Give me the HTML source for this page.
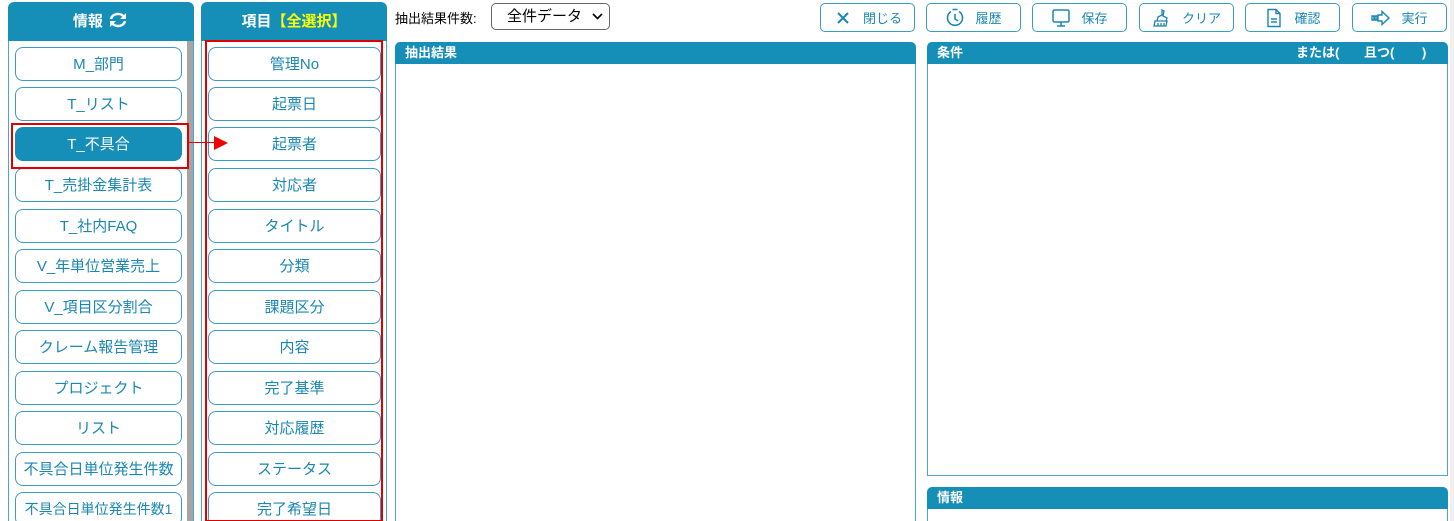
<!DOCTYPE html>
<html><head><meta charset="utf-8"><style>
*{box-sizing:border-box;margin:0;padding:0}
html,body{width:1454px;height:521px;overflow:hidden}
body{background:#fff;font-family:"Liberation Sans","Noto Sans CJK JP",sans-serif;position:relative}
.abs{position:absolute}
.hdr{background:#168fb8;color:#fff;border-radius:6px 6px 0 0;text-align:center;font-size:15px;font-weight:bold;line-height:40px}
.col{border:1px solid #4aa6cb;border-top:none;background:#fff}
.btn{position:absolute;height:34px;border:1.5px solid #3a9cc4;border-radius:8px;background:#fff;color:#1a87b0;font-size:15px;text-align:center;line-height:33px;white-space:nowrap}
.sel{background:#168fb8;color:#fff;border-color:#168fb8}
.tb{position:absolute;top:3px;height:29px;width:95px;border:1.5px solid #3a9cc4;border-radius:5px;color:#1a87b0;font-size:13px;display:flex;align-items:center;justify-content:center;gap:10px}
.tb svg{width:20px;height:20px}
.ph{background:#168fb8;color:#fff;font-size:13px;font-weight:bold;height:22px;line-height:21px;padding-left:10px;border-radius:5px 5px 0 0;position:relative}
.pb{border:1.5px solid #4aa6cb;border-top:none;background:#fff}
</style></head><body>

<div class="abs hdr" style="left:8px;top:2px;width:186px;height:39px">情報 <svg width="22" height="18" viewBox="0 0 22 18" style="vertical-align:-3px"><path d="M4 8a7 6 0 0 1 13-2" stroke="#fff" stroke-width="2.5" fill="none"/><path d="M19 2v6h-6z" fill="#fff"/><path d="M18 10a7 6 0 0 1-13 2" stroke="#fff" stroke-width="2.5" fill="none"/><path d="M3 16v-6h6z" fill="#fff"/></svg></div>
<div class="abs col" style="left:8px;top:41px;width:186px;height:481px"></div>
<div class="abs" style="left:187px;top:41px;width:6px;height:480px;background:#a5a5a5"></div>

<div class="btn" style="left:15px;top:47px;width:167px">M_部門</div>
<div class="btn" style="left:15px;top:87px;width:167px">T_リスト</div>
<div class="btn sel" style="left:15px;top:127px;width:167px">T_不具合</div>
<div class="btn" style="left:15px;top:168px;width:167px">T_売掛金集計表</div>
<div class="btn" style="left:15px;top:209px;width:167px">T_社内FAQ</div>
<div class="btn" style="left:15px;top:249px;width:167px">V_年単位営業売上</div>
<div class="btn" style="left:15px;top:290px;width:167px">V_項目区分割合</div>
<div class="btn" style="left:15px;top:330px;width:167px">クレーム報告管理</div>
<div class="btn" style="left:15px;top:371px;width:167px">プロジェクト</div>
<div class="btn" style="left:15px;top:411px;width:167px">リスト</div>
<div class="btn" style="left:15px;top:452px;width:167px">不具合日単位発生件数</div>
<div class="btn" style="left:15px;top:492px;width:167px;font-size:14px">不具合日単位発生件数1</div>
<div class="abs" style="left:11px;top:123px;width:178px;height:46px;border:2px solid #e00000"></div>

<div class="abs hdr" style="left:201px;top:2px;width:186px;height:39px">項目<span style="color:#ffff00">【全選択】</span></div>
<div class="abs col" style="left:201px;top:41px;width:186px;height:481px"></div>
<div class="btn" style="left:208px;top:47px;width:173px">管理No</div>
<div class="btn" style="left:208px;top:87px;width:173px">起票日</div>
<div class="btn" style="left:208px;top:127px;width:173px">起票者</div>
<div class="btn" style="left:208px;top:168px;width:173px">対応者</div>
<div class="btn" style="left:208px;top:209px;width:173px">タイトル</div>
<div class="btn" style="left:208px;top:249px;width:173px">分類</div>
<div class="btn" style="left:208px;top:290px;width:173px">課題区分</div>
<div class="btn" style="left:208px;top:330px;width:173px">内容</div>
<div class="btn" style="left:208px;top:371px;width:173px">完了基準</div>
<div class="btn" style="left:208px;top:411px;width:173px">対応履歴</div>
<div class="btn" style="left:208px;top:452px;width:173px">ステータス</div>
<div class="btn" style="left:208px;top:492px;width:173px">完了希望日</div>
<div class="abs" style="left:205px;top:40px;width:178px;height:482px;border:2px solid #e00000"></div>
<div class="abs" style="left:189px;top:142px;width:28px;height:1px;background:#e00000"></div>
<svg class="abs" style="left:214px;top:136px" width="15" height="14"><path d="M0 0L14 7L0 14z" fill="#f00000"/></svg>

<div class="abs" style="left:395px;top:8px;font-size:13px;color:#000">抽出結果件数:</div>
<div class="abs" style="left:491px;top:3px;width:119px;height:27px;border:1px solid #666;border-radius:5px;font-size:15px;line-height:25px;padding-left:15px;color:#000">全件データ<svg style="position:absolute;right:6px;top:9px" width="11" height="8"><path d="M1 1l4.5 4.5L10 1" stroke="#000" stroke-width="1.6" fill="none"/></svg></div>

<div class="tb" style="left:820px"><svg viewBox="0 0 20 20"><path d="M5 5l10 10M15 5L5 15" stroke="#1a87b0" stroke-width="2"/></svg>閉じる</div>
<div class="tb" style="left:926px"><svg viewBox="0 0 20 20"><path d="M6 3.5A7.5 7.5 0 1 0 14 3.5" stroke="#1a87b0" stroke-width="1.6" fill="none"/><path d="M7.5 1.5h5M10 6v5l3 2" stroke="#1a87b0" stroke-width="1.6" fill="none"/></svg>履歴</div>
<div class="tb" style="left:1032px"><svg viewBox="0 0 20 20"><rect x="2" y="2" width="16" height="12" rx="1.5" stroke="#1a87b0" stroke-width="1.5" fill="none"/><path d="M10 14v4M6 18h8" stroke="#1a87b0" stroke-width="1.5"/></svg>保存</div>
<div class="tb" style="left:1139px"><svg viewBox="0 0 20 20"><path d="M10 2l2 1-1 5 4 2-1 3H5l1-4 4 -2z M3 13h12l-1 5H2z M6 15v3M9 15v3M12 15v3" stroke="#1a87b0" stroke-width="1.3" fill="none"/></svg>クリア</div>
<div class="tb" style="left:1245px"><svg viewBox="0 0 20 20"><path d="M4 1.5h8l4 4v13H4z M12 1.5v4h4 M7 11h6M7 14h6" stroke="#1a87b0" stroke-width="1.4" fill="none"/></svg>確認</div>
<div class="tb" style="left:1352px"><svg viewBox="0 0 20 20"><path d="M1 8h2v4H1z M4 8h2v4H4z M7 7h4V3.5L18 10l-7 6.5V13H7z" stroke="#1a87b0" stroke-width="1.4" fill="none"/></svg>実行</div>

<div class="abs" style="left:395px;top:42px;width:521px"><div class="ph">抽出結果</div></div>
<div class="abs pb" style="left:395px;top:64px;width:521px;height:470px"></div>

<div class="abs" style="left:927px;top:42px;width:521px"><div class="ph">条件<span style="position:absolute;left:369px">または(</span><span style="position:absolute;left:437px">且つ(</span><span style="position:absolute;left:495px">)</span></div></div>
<div class="abs pb" style="left:927px;top:64px;width:521px;height:412px"></div>

<div class="abs" style="left:927px;top:487px;width:521px"><div class="ph">情報</div></div>
<div class="abs pb" style="left:927px;top:509px;width:521px;height:30px"></div>
<div class="abs" style="left:1450px;top:0;width:4px;height:521px;background:#f0f0f0"></div>
</body></html>
